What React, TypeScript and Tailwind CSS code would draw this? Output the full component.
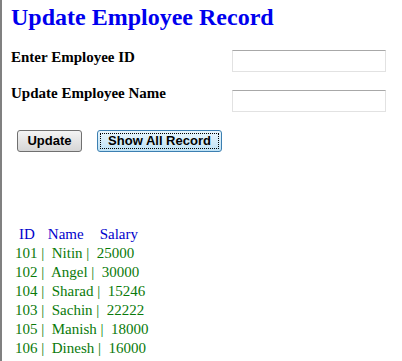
const rows = [
  { id: 101, name: "Nitin", salary: 25000 },
  { id: 102, name: "Angel", salary: 30000 },
  { id: 104, name: "Sharad", salary: 15246 },
  { id: 103, name: "Sachin", salary: 22222 },
  { id: 105, name: "Manish", salary: 18000 },
  { id: 106, name: "Dinesh", salary: 16000 },
];

export default function App() {
  return (
    <div className="h-[361px] w-[402px] overflow-hidden bg-white border-l-2 border-[#808080] pl-[9px] font-['Liberation_Serif',serif]">
      <h1 className="pt-[3px] text-[24px] leading-[28px] font-bold text-[#0000ee]">Update Employee Record</h1>

      <div className="mt-[16px] flex items-start">
        <label className="w-[221px] text-[15px] leading-[20px] font-bold text-black">Enter Employee ID</label>
        <input className="mt-[3px] h-[22px] w-[154px] border border-[#e2e2e2] border-t-[#a8a8a8] bg-white" />
      </div>
      <div className="mt-[15px] flex items-start">
        <label className="mt-[-4px] w-[221px] text-[15px] leading-[20px] font-bold text-black">Update Employee Name</label>
        <input className="mt-[3px] h-[22px] w-[154px] border border-[#e2e2e2] border-t-[#a8a8a8] bg-white" />
      </div>

      <div className="mt-[18px] flex gap-[15px] pl-[6px] font-['Liberation_Sans',sans-serif] text-[13px] font-bold">
        <button className="h-[22px] w-[65px] rounded-[3px] border border-[#707070] bg-gradient-to-b from-[#f4f4f4] to-[#d6d6d6] text-black">
          Update
        </button>
        <button className="h-[22px] w-[125px] rounded-[3px] border border-[#3c7fb1] bg-gradient-to-b from-[#e8f5fc] to-[#bfe2f5] p-[2px] text-black">
          <span className="flex h-full w-full items-center justify-center border border-dotted border-black">Show All Record</span>
        </button>
      </div>

      <div className="mt-[73px] text-[15px] leading-[19px]">
        <div className="flex pl-[8px] text-[#0000cc]">
          <span>ID</span>
          <span className="ml-[13px]">Name</span>
          <span className="ml-[16px]">Salary</span>
        </div>
        {rows.map((r) => (
          <div key={r.id} className="whitespace-pre pl-[4px] text-[#0a7a0a]">
            {`${r.id} |  ${r.name} |  ${r.salary}`}
          </div>
        ))}
      </div>
    </div>
  );
}
